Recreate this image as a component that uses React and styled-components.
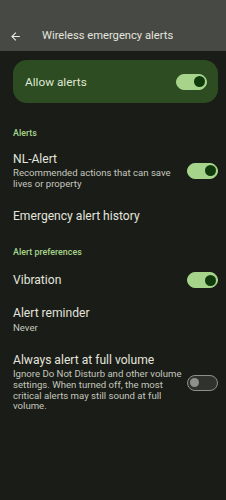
import React from "react";
import styled, { createGlobalStyle } from "styled-components";

const Global = createGlobalStyle`
  html, body { margin: 0; padding: 0; background: #1a1c18; }
  body { font-family: Roboto, "Noto Sans", sans-serif; }
`;

const Page = styled.div`
  width: 226px;
  height: 500px;
  background: #1a1c18;
  color: #e2e3dc;
  overflow: hidden;
`;

const TopBar = styled.div`
  height: 51px;
  background: #474944;
  display: flex;
  align-items: flex-end;
  padding: 0 0 8px 8px;
  box-sizing: border-box;
`;

const Back = styled.div`
  width: 15px;
  height: 14px;
  display: flex;
  align-items: center;
  justify-content: center;
  margin-right: 19px;
`;

const Title = styled.div`
  font-size: 11.2px;
  color: #e4e5de;
  line-height: 14px;
`;

const Card = styled.div`
  margin: 9px 8px 0 13px;
  height: 43px;
  border-radius: 14px;
  background: #2d4c21;
  display: flex;
  align-items: center;
  justify-content: space-between;
  padding: 0 11px 0 12px;
`;

const CardLabel = styled.div`
  font-size: 11.8px;
  color: #dfe8d4;
`;

const Track = styled.div`
  width: 31px;
  height: 16px;
  border-radius: 9px;
  box-sizing: border-box;
  display: flex;
  align-items: center;
  flex-shrink: 0;
  background: ${(p) => (p.$on ? "#a6d48b" : "#30332d")};
  border: 1.5px solid ${(p) => (p.$on ? "#a6d48b" : "#8e9189")};
  justify-content: ${(p) => (p.$on ? "flex-end" : "flex-start")};
  padding: 0 1px;
`;

const Thumb = styled.div`
  width: ${(p) => (p.$on ? 11 : 9)}px;
  height: ${(p) => (p.$on ? 11 : 9)}px;
  border-radius: 50%;
  background: ${(p) => (p.$on ? "#113a0c" : "#8e9189")};
  margin: 0 ${(p) => (p.$on ? 0 : 1)}px;
`;

const Section = styled.div`
  font-size: 8.9px;
  font-weight: 500;
  color: #a6d48b;
  padding: 0 13px;
  line-height: 10px;
  margin-top: ${(p) => p.$mt}px;
`;

const Row = styled.div`
  display: flex;
  align-items: center;
  justify-content: space-between;
  padding: 0 8px 0 13px;
  margin-top: ${(p) => p.$mt}px;
`;

const RowText = styled.div`
  display: flex;
  flex-direction: column;
  max-width: 172px;
`;

const RowTitle = styled.div`
  font-size: 12.1px;
  line-height: 15px;
  color: #e3e4dc;
`;

const RowSub = styled.div`
  font-size: 9.6px;
  line-height: 10.7px;
  color: #c4c7bd;
  margin-top: ${(p) => p.$mt ?? 1}px;
`;

const Toggle = ({ on }) => (
  <Track $on={on}>
    <Thumb $on={on} />
  </Track>
);

export default function App() {
  return (
    <Page>
      <Global />
      <TopBar>
        <Back>
          <svg width="13" height="13" viewBox="0 0 24 24">
            <path d="M20 11H7.83l5.59-5.59L12 4l-8 8 8 8 1.41-1.41L7.83 13H20v-2z" fill="#ecece6" />
          </svg>
        </Back>
        <Title>Wireless emergency alerts</Title>
      </TopBar>
      <Card>
        <CardLabel>Allow alerts</CardLabel>
        <Toggle on />
      </Card>
      <Section $mt={25}>Alerts</Section>
      <Row $mt={14}>
        <RowText>
          <RowTitle>NL-Alert</RowTitle>
          <RowSub>Recommended actions that can save lives or property</RowSub>
        </RowText>
        <Toggle on />
      </Row>
      <Row $mt={20}>
        <RowTitle>Emergency alert history</RowTitle>
      </Row>
      <Section $mt={23}>Alert preferences</Section>
      <Row $mt={15}>
        <RowTitle>Vibration</RowTitle>
        <Toggle on />
      </Row>
      <Row $mt={18}>
        <RowText>
          <RowTitle>Alert reminder</RowTitle>
          <RowSub $mt={2}>Never</RowSub>
        </RowText>
      </Row>
      <Row $mt={19}>
        <RowText>
          <RowTitle>Always alert at full volume</RowTitle>
          <RowSub>Ignore Do Not Disturb and other volume settings. When turned off, the most critical alerts may still sound at full volume.</RowSub>
        </RowText>
        <Toggle />
      </Row>
    </Page>
  );
}
